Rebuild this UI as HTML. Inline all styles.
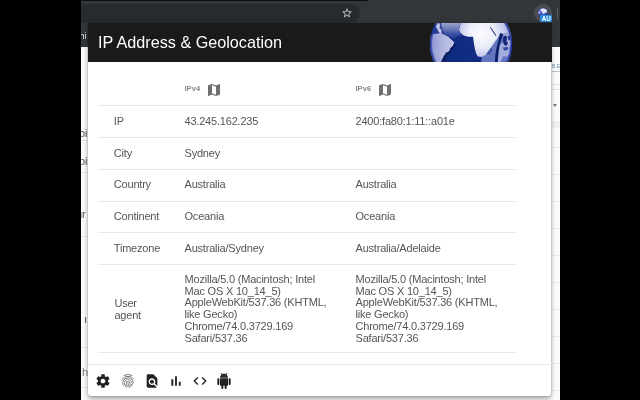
<!DOCTYPE html>
<html><head><meta charset="utf-8"><title>IP Address &amp; Geolocation</title>
<style>
html,body{margin:0;padding:0;}
body{width:640px;height:400px;background:#000;position:relative;overflow:hidden;font-family:"Liberation Sans",Arial,sans-serif;}
.abs{position:absolute;}
#screen{will-change:transform;left:81px;top:0;width:479px;height:400px;background:#fbfbfb;overflow:hidden;}
#toolbar{left:0;top:0;width:479px;height:46.5px;background:#333639;}
#topstrip{left:0;top:0;width:287px;height:0.8px;background:#0c0d0e;}
#pill{left:-20px;top:3.75px;width:298.5px;height:19px;border-radius:9.5px;background:#282b2e;}
#popup{left:6.8px;top:23.2px;width:463.6px;height:373.2px;background:#fff;box-shadow:0 0 0 0.6px rgba(0,0,0,.10),0 2.5px 5px rgba(0,0,0,.34);border-radius:0 0 3px 3px;}
#in{left:-0.3px;top:0.3px;width:464px;height:372px;}
#hdr{left:0;top:-0.3px;width:464px;height:39.3px;background:#1a1a1a;overflow:hidden;}
#title{left:10.4px;top:9.3px;font-size:16.2px;line-height:20px;color:#fff;white-space:nowrap;}
.row{position:absolute;left:10.5px;width:418px;border-top:1px solid #e8e8e8;height:0;}
.t{position:absolute;font-size:11px;line-height:12px;color:#555;white-space:nowrap;letter-spacing:-0.2px;}
.l{left:26.3px;}
.c1{left:97px;}
.c2{left:268px;}
.h{font-size:7.6px;line-height:10px;color:#888;letter-spacing:0;font-weight:bold;}
svg{position:absolute;display:block;}
.pg{font-size:11px;line-height:12px;color:#555;white-space:nowrap;}
#footline{left:0;top:340.5px;width:464px;height:1px;background:#eaeaea;}
</style></head>
<body>
<div id="screen" class="abs">
  <div id="toolbar" class="abs"></div>
  <div id="topstrip" class="abs"></div>
  <div id="pill" class="abs"></div>
  <svg style="left:259.6px;top:6.9px" width="12" height="12" viewBox="0 0 24 24"><path fill="#c8cacd" d="M22 9.24l-7.19-.62L12 2 9.19 8.630 2 9.240l5.460 4.730L5.820 21 12 17.270 18.180 21l-1.630-7.030L22 9.240zM12 15.400l-3.760 2.270 1-4.280-3.320-2.880 4.380-.38L12 6.100l1.710 4.040 4.380.38-3.320 2.880 1 4.280L12 15.400z"/></svg>

  <div class="abs" style="left:453px;top:4px;width:18px;height:18px;border-radius:9px;background:#494c50;"></div>
  <svg style="left:457.1px;top:7.6px" width="9.6" height="9.6" viewBox="0 0 10 10"><defs><radialGradient id="mg" cx="0.5" cy="0.3" r="0.75"><stop offset="0" stop-color="#7f8ede"/><stop offset="0.6" stop-color="#3446ae"/><stop offset="1" stop-color="#1c2a8c"/></radialGradient></defs><circle cx="5" cy="5" r="5" fill="url(#mg)"/><path d="M2.6 1.4 L5 0.4 L8 1 L9.500 3.200 L9 5 L6.800 4.600 L6.600 6.600 L5.400 6 L4.400 3.600 L2.800 3 Z" fill="#e9ebfa"/><path d="M0.500 3.200 L2.400 3.800 L2 6 L0.600 6.400Z" fill="#b4bcec"/></svg>
  <div class="abs" style="left:459.3px;top:14.7px;width:12px;height:7.5px;background:#2b8de0;border-radius:1px;"></div>
  <div class="abs" style="left:459.3px;top:14.6px;width:12px;height:7.5px;line-height:7.5px;font-size:6.3px;font-weight:bold;color:#fff;text-align:center;letter-spacing:-0.1px;">AU</div>
  <div class="abs" style="left:476px;top:8px;width:1px;height:11px;background:#5a5e62;"></div>
  <div class="abs pg" style="left:-1.5px;top:29.5px;color:#e8e8e8;font-size:9px;">hi</div>
  <div class="abs pg" style="left:-2px;top:127.3px;">pi</div>
  <div class="abs pg" style="left:-2px;top:154.8px;">pi</div>
  <div class="abs pg" style="left:-5px;top:208.3px;">gr</div>
  <div class="abs" style="left:4.2px;top:317px;width:1px;height:5.500px;background:#555"></div>
  <div class="abs pg" style="left:1px;top:365.5px;color:#777;">h</div>
  <div class="abs" style="left:0;top:140px;width:7px;height:1px;background:#e6e6e6"></div>
  <div class="abs" style="left:0;top:172px;width:7px;height:1px;background:#e6e6e6"></div>
  <div class="abs" style="left:0;top:236px;width:7px;height:1px;background:#e6e6e6"></div>
  <div class="abs" style="left:0;top:347px;width:7px;height:1px;background:#e6e6e6"></div>
  <div class="abs" style="left:0;top:387px;width:7px;height:1px;background:#e6e6e6"></div>
  <div class="abs" style="left:470.5px;top:62.5px;font-size:6px;line-height:7px;color:#7f9ab0;letter-spacing:1px;white-space:nowrap;">BEA</div>
  <div class="abs" style="left:470.5px;top:70.5px;width:9px;height:1px;background:#b9c6d0"></div>
  <div class="abs" style="left:470.5px;top:83.5px;width:9px;height:1px;background:#e2e2e2"></div>
  <div class="abs" style="left:470.5px;top:89px;width:9px;height:1px;background:#e2e2e2"></div>
  <div class="abs" style="left:471.5px;top:103.5px;width:0;height:0;border-left:2.5px solid transparent;border-right:2.5px solid transparent;border-top:3px solid #777;"></div>
  <div class="abs" style="left:470.5px;top:121px;width:9px;height:7px;background:#f0f0f0"></div>
  <div class="abs" style="left:470.5px;top:147px;width:9px;height:1px;background:#ebebeb"></div>
  <div class="abs" style="left:470.5px;top:174px;width:9px;height:1px;background:#ebebeb"></div>
  <div class="abs" style="left:470.5px;top:201px;width:9px;height:1px;background:#ebebeb"></div>
  <div class="abs" style="left:470.5px;top:228px;width:9px;height:1px;background:#ebebeb"></div>
  <div class="abs" style="left:470.5px;top:255px;width:9px;height:1px;background:#ebebeb"></div>
  <div class="abs" style="left:470.5px;top:282px;width:9px;height:1px;background:#ebebeb"></div>
  <div class="abs" style="left:470.5px;top:309px;width:9px;height:1px;background:#ebebeb"></div>
  <div class="abs" style="left:470.5px;top:336px;width:9px;height:1px;background:#ebebeb"></div>
  <div class="abs" style="left:470.5px;top:363px;width:9px;height:1px;background:#ebebeb"></div>
  <div class="abs" style="left:470.5px;top:390px;width:9px;height:1px;background:#ebebeb"></div>
  <div id="popup" class="abs"><div id="in" class="abs">
    <div id="hdr" class="abs">

      <svg id="globe" style="left:337.5px;top:-3.2px" width="92" height="46" viewBox="0 0 640 320">
        <defs>
          <radialGradient id="gsea" cx="320" cy="170" r="300" gradientUnits="userSpaceOnUse">
            <stop offset="0" stop-color="#112e84"/><stop offset="0.6" stop-color="#0f2b7e"/><stop offset="0.88" stop-color="#0d2368"/><stop offset="1" stop-color="#0a1a50"/>
          </radialGradient>
          <radialGradient id="gland" cx="395" cy="95" r="255" gradientUnits="userSpaceOnUse">
            <stop offset="0" stop-color="#fbfbfe"/><stop offset="0.35" stop-color="#eceef9"/><stop offset="0.62" stop-color="#c4c9ec"/><stop offset="0.8" stop-color="#9aa2da"/><stop offset="1" stop-color="#7c86cf"/>
          </radialGradient>
          <linearGradient id="gsa" x1="40" y1="0" x2="210" y2="0" gradientUnits="userSpaceOnUse">
            <stop offset="0" stop-color="#8e97d4"/><stop offset="0.4" stop-color="#aab1de"/><stop offset="1" stop-color="#c6caea"/>
          </linearGradient>
          <linearGradient id="ggloss" x1="0" y1="20" x2="0" y2="125" gradientUnits="userSpaceOnUse">
            <stop offset="0" stop-color="#a4acd0" stop-opacity="0.95"/><stop offset="0.5" stop-color="#7481b8" stop-opacity="0.75"/><stop offset="1" stop-color="#3d4f9c" stop-opacity="0"/>
          </linearGradient>
          <radialGradient id="grim" cx="320.5" cy="168" r="287.5" gradientUnits="userSpaceOnUse">
            <stop offset="0.93" stop-color="#2236a2" stop-opacity="0"/><stop offset="0.975" stop-color="#20349c" stop-opacity="0.95"/><stop offset="1" stop-color="#142477" stop-opacity="1"/>
          </radialGradient>
          <clipPath id="gclip"><circle cx="320.500" cy="168" r="287"/></clipPath>
        </defs>
        <circle cx="320.500" cy="168" r="287.500" fill="url(#gsea)"/>
        <g clip-path="url(#gclip)">
          <path fill="#3048a4" d="M40 20 L240 20 L236 75 L250 95 L200 130 L110 88 L50 98 Z" opacity="0.75"/>
          <path fill="url(#ggloss)" d="M112 20 L250 20 L240 50 L237 72 L246 90 L262 110 Q 200 135 150 110 Q 118 80 112 20 Z"/>
          <path fill="#6474c0" d="M396 257 L420 246 L452 202 L479 164 L507 126 L523 93 L600 93 L600 300 L390 300 Z"/>
          <path fill="url(#gland)" d="M258 0 L242 48 L237 70 L250 92 L272 110 L300 116 L334 116 L340 160 L347 202 L356 234 L367 254 L396 257 L420 246 L436 224 L452 202 L466 183 L479 164 L493 145 L507 126 L523 93 L545 98 L565 92 L595 104 L640 104 L640 0 Z"/>
          <path fill="#0d2470" d="M452 52 L458 50 L496 108 L491 112 Z"/>
          <path fill="#a4acdf" d="M520 170 L540 158 L562 172 L588 176 L590 230 L572 254 L545 252 L536 270 L520 300 L506 300 L512 240 Z"/>
          <path fill="#a9b0e1" d="M545 96 L600 96 L600 180 L562 172 L548 150 Z"/>
          <path fill="#0c2068" d="M523 93 L544 97 L530 140 L518 180 L510 230 L506 300 L486 300 L490 236 L498 190 L510 146 Z"/>
          <path fill="#14297a" d="M546 112 L562 108 L572 124 L566 146 L578 160 L566 180 L550 172 L542 146 Z"/>
          <path fill="#1b3490" d="M574 108 L590 112 L592 138 L580 142 Z"/>
          <path fill="#1b3490" d="M540 192 L576 188 L580 206 L552 214 Z" opacity="0.8"/>
          <path fill="none" stroke="#14297a" stroke-width="5" d="M436 236 Q 440 214 462 200 Q 468 214 452 232 Z" opacity="0.8"/>
          <path fill="url(#gsa)" d="M30 104 L56 98 L111 90 L160 115 L205 157 L191 184 L177 195 L170 216 L146 230 L132 250 L118 278 L111 300 L40 300 L20 200 Z"/>
          <path fill="#c3c8ea" d="M66 24 L98 20 L106 40 L100 52 L112 66 L116 84 L111 94 L96 86 L86 62 L72 46 Z"/>
          <path fill="#091a55" opacity="0.8" d="M205 157 L214 170 L200 196 L186 206 L180 226 L160 240 L146 262 L134 300 L111 300 L118 278 L132 250 L146 230 L170 216 L177 195 L191 184 Z"/>
          <circle cx="320.500" cy="168" r="287.500" fill="url(#grim)"/>
        </g>
      </svg>
      <div id="title" class="abs">IP Address &amp; Geolocation</div>
    </div>
    <div class="t h c1" style="top:60.7px">IPv4</div>
    <div class="t h c2" style="top:60.7px">IPv6</div>
    <svg style="left:118.2px;top:58.5px" width="16" height="16" viewBox="0 0 24 24"><path fill="#707070" d="M20.5 3l-.16.03L15 5.100 9 3 3.360 4.900c-.21.07-.36.25-.36.48V20.500c0 .28.220.5.5.5l.16-.03L9 18.900l6 2.100 5.640-1.900c.21-.07.36-.25.36-.48V3.500c0-.28-.22-.5-.5-.5zM15 19l-6-2.110V5l6 2.110V19z"/></svg>
    <svg style="left:289.4px;top:58.5px" width="16" height="16" viewBox="0 0 24 24"><path fill="#707070" d="M20.5 3l-.16.03L15 5.100 9 3 3.360 4.900c-.21.07-.36.25-.36.48V20.500c0 .28.220.5.5.5l.16-.03L9 18.900l6 2.100 5.640-1.900c.21-.07.36-.25.36-.48V3.500c0-.28-.22-.5-.5-.5zM15 19l-6-2.110V5l6 2.110V19z"/></svg>

    <div class="row" style="top:81.4px"></div>
    <div class="t l" style="top:91.5px">IP</div>
    <div class="t c1" style="top:91.5px">43.245.162.235</div>
    <div class="t c2" style="top:91.5px">2400:fa80:1:11::a01e</div>

    <div class="row" style="top:113.4px"></div>
    <div class="t l" style="top:123.3px">City</div>
    <div class="t c1" style="top:123.3px">Sydney</div>

    <div class="row" style="top:145.3px"></div>
    <div class="t l" style="top:155px">Country</div>
    <div class="t c1" style="top:155px">Australia</div>
    <div class="t c2" style="top:155px">Australia</div>

    <div class="row" style="top:177.1px"></div>
    <div class="t l" style="top:186.8px">Continent</div>
    <div class="t c1" style="top:186.8px">Oceania</div>
    <div class="t c2" style="top:186.8px">Oceania</div>

    <div class="row" style="top:208.9px"></div>
    <div class="t l" style="top:218.6px">Timezone</div>
    <div class="t c1" style="top:218.6px">Australia/Sydney</div>
    <div class="t c2" style="top:218.6px">Australia/Adelaide</div>

    <div class="row" style="top:240.6px"></div>
    <div class="t l" style="top:274.2px;left:26.9px;line-height:11.9px">User<br>agent</div>
    <div class="t c1" style="top:250.2px;line-height:11.9px">Mozilla/5.0 (Macintosh; Intel<br>Mac OS X 10_14_5)<br>AppleWebKit/537.36 (KHTML,<br>like Gecko)<br>Chrome/74.0.3729.169<br>Safari/537.36</div>
    <div class="t c2" style="top:250.2px;line-height:11.9px">Mozilla/5.0 (Macintosh; Intel<br>Mac OS X 10_14_5)<br>AppleWebKit/537.36 (KHTML,<br>like Gecko)<br>Chrome/74.0.3729.169<br>Safari/537.36</div>
    <div class="row" style="top:328.9px"></div>

    <div id="footline" class="abs"></div>
    <svg style="left:7.8px;top:349.3px" width="16" height="16" viewBox="0 0 24 24"><path fill="#222" d="M19.43 12.980c.04-.32.07-.64.07-.98s-.03-.66-.07-.98l2.110-1.650c.19-.15.24-.42.12-.64l-2-3.460c-.12-.22-.39-.3-.61-.22l-2.490 1c-.52-.4-1.080-.73-1.690-.98l-.38-2.650C14.460 2.180 14.250 2 14 2h-4c-.25 0-.46.18-.49.42l-.38 2.650c-.61.25-1.170.59-1.690.98l-2.490-1c-.23-.09-.49 0-.61.22l-2 3.460c-.13.22-.07.49.12.64l2.110 1.650c-.04.32-.07.65-.07.98s.03.66.07.98l-2.110 1.650c-.19.15-.24.42-.12.64l2 3.460c.12.22.39.3.61.22l2.490-1c.52.4 1.080.73 1.690.98l.38 2.650c.03.24.24.42.49.42h4c.25 0 .46-.18.49-.42l.38-2.650c.61-.25 1.170-.59 1.690-.98l2.490 1c.23.09.49 0 .61-.22l2-3.460c.12-.22.07-.49-.12-.64l-2.110-1.650zM12 15.500c-1.930 0-3.500-1.570-3.500-3.500s1.570-3.500 3.500-3.500 3.500 1.570 3.500 3.500-1.570 3.500-3.500 3.500z"/></svg>
    <svg style="left:32.9px;top:349.3px" width="16" height="16" viewBox="0 0 24 24"><path fill="#555" d="M17.810 4.470c-.08 0-.16-.02-.23-.06C15.660 3.420 14 3 12.010 3c-1.980 0-3.860.47-5.570 1.410-.24.13-.54.04-.68-.2-.13-.24-.04-.55.2-.68C7.820 2.520 9.860 2 12.010 2c2.130 0 3.990.47 6.030 1.520.25.13.34.43.21.67-.09.18-.26.28-.44.28zM3.500 9.720c-.1 0-.2-.03-.29-.09-.23-.16-.28-.47-.12-.7.990-1.400 2.250-2.500 3.750-3.270C9.980 4.040 14 4.030 17.150 5.650c1.500.77 2.760 1.860 3.750 3.250.16.220.11.540-.12.700-.23.160-.54.110-.7-.12-.9-1.260-2.040-2.250-3.390-2.940-2.870-1.470-6.540-1.470-9.400.01-1.360.7-2.500 1.700-3.400 2.960-.08.14-.23.210-.39.210zm6.250 12.070c-.13 0-.26-.05-.35-.15-.87-.87-1.340-1.430-2.010-2.640-.69-1.230-1.050-2.730-1.050-4.340 0-2.970 2.540-5.390 5.660-5.390s5.660 2.420 5.660 5.390c0 .28-.22.5-.5.5s-.5-.22-.5-.5c0-2.420-2.090-4.390-4.660-4.390-2.570 0-4.660 1.970-4.660 4.390 0 1.440.32 2.770.93 3.850.64 1.150 1.080 1.640 1.850 2.420.19.2.19.51 0 .71-.11.1-.24.15-.37.15zm7.170-1.850c-1.190 0-2.240-.3-3.100-.89-1.490-1.010-2.380-2.650-2.380-4.390 0-.28.220-.5.5-.5s.5.220.5.500c0 1.410.72 2.740 1.940 3.560.71.480 1.540.71 2.540.71.240 0 .64-.03 1.040-.1.270-.05.53.13.58.41.05.27-.13.53-.41.58-.57.11-1.070.12-1.210.12zM14.910 22c-.04 0-.09-.01-.13-.02-1.590-.44-2.630-1.030-3.720-2.100-1.400-1.390-2.170-3.240-2.170-5.220 0-1.620 1.380-2.940 3.080-2.940 1.700 0 3.080 1.320 3.080 2.940 0 1.070.93 1.940 2.080 1.940s2.080-.87 2.080-1.940c0-3.770-3.250-6.830-7.250-6.830-2.840 0-5.440 1.580-6.610 4.030-.39.810-.59 1.760-.59 2.800 0 .78.070 2.010.67 3.610.1.260-.03.55-.29.640-.26.100-.55-.04-.64-.29-.49-1.310-.73-2.610-.73-3.960 0-1.200.23-2.290.68-3.240 1.330-2.790 4.280-4.600 7.510-4.600 4.550 0 8.250 3.510 8.250 7.830 0 1.620-1.380 2.940-3.080 2.940s-3.080-1.320-3.080-2.940c0-1.070-.93-1.940-2.080-1.940s-2.080.87-2.080 1.940c0 1.710.66 3.310 1.870 4.510.95.940 1.860 1.460 3.270 1.850.27.070.42.350.35.610-.05.230-.26.380-.47.380z"/></svg>
    <svg style="left:56.8px;top:349.3px" width="16" height="16" viewBox="0 0 24 24"><path fill="#222" d="M20 19.590V8l-6-6H6c-1.100 0-1.990.9-1.990 2L4 20c0 1.100.89 2 1.990 2H18c.45 0 .85-.15 1.190-.4l-4.430-4.430c-.8.520-1.740.830-2.760.830-2.760 0-5-2.240-5-5s2.240-5 5-5 5 2.240 5 5c0 1.020-.31 1.960-.83 2.750L20 19.590zM9 13c0 1.660 1.340 3 3 3s3-1.340 3-3-1.340-3-3-3-3 1.340-3 3z"/></svg>
    <svg style="left:80.1px;top:349.3px" width="16" height="16" viewBox="0 0 24 24"><path fill="#222" d="M5 9.200h3V19H5zM10.600 5h2.800v14h-2.800zm5.600 8H19v6h-2.800z"/></svg>
    <svg style="left:104.5px;top:349.3px" width="16" height="16" viewBox="0 0 24 24"><path fill="#222" d="M9.400 16.600L4.800 12l4.600-4.600L8 6l-6 6 6 6 1.400-1.400zm5.200 0l4.600-4.600-4.600-4.600L16 6l6 6-6 6-1.400-1.400z"/></svg>
    <svg style="left:128.8px;top:349.3px" width="16" height="16" viewBox="0 0 24 24"><path fill="#222" d="M6 18c0 .55.45 1 1 1h1v3.500c0 .83.67 1.500 1.500 1.500s1.500-.67 1.500-1.500V19h2v3.500c0 .83.67 1.500 1.500 1.500s1.500-.67 1.500-1.500V19h1c.55 0 1-.45 1-1V8H6v10zM3.500 8C2.670 8 2 8.670 2 9.500v7c0 .83.67 1.500 1.500 1.500S5 17.330 5 16.500v-7C5 8.670 4.330 8 3.500 8zm17 0c-.83 0-1.500.67-1.500 1.500v7c0 .83.67 1.500 1.500 1.500s1.500-.67 1.500-1.500v-7c0-.83-.67-1.500-1.500-1.500zm-4.970-5.840l1.300-1.300c.2-.2.2-.51 0-.71-.2-.2-.51-.2-.71 0l-1.480 1.480C13.850 1.230 12.950 1 12 1c-.96 0-1.860.23-2.660.63L7.850.15c-.2-.2-.51-.2-.71 0-.2.2-.2.51 0 .71l1.310 1.310C6.970 3.260 6 5.010 6 7h12c0-1.990-.97-3.750-2.470-4.840zM10 5H9V4h1v1zm5 0h-1V4h1v1z"/></svg>
  </div></div>
</div>
</body></html>
